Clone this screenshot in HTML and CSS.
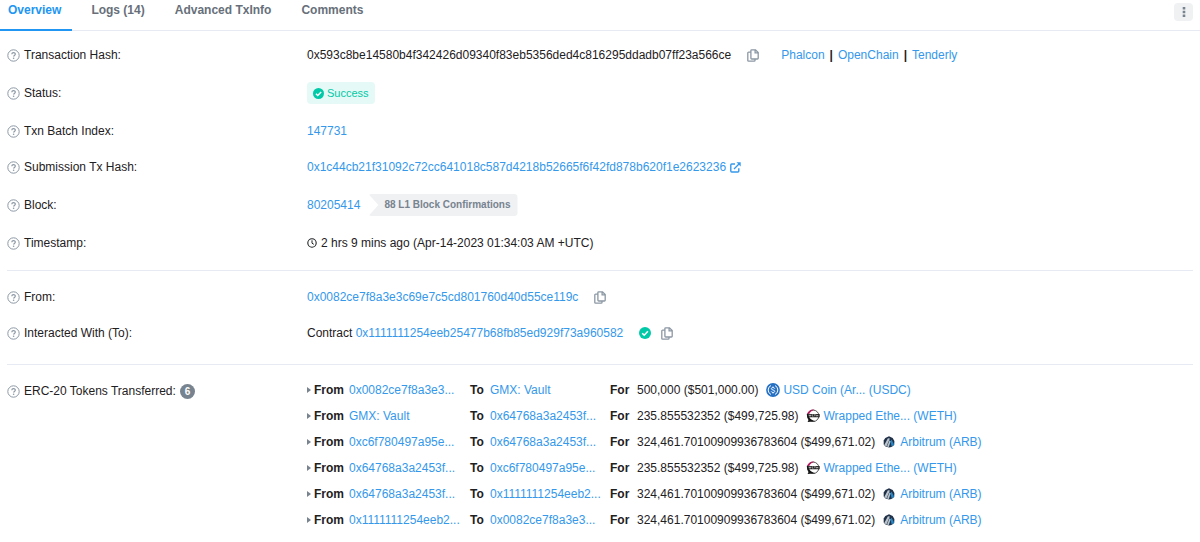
FILE: index.html
```
<!DOCTYPE html>
<html lang="en">
<head>
    <meta charset="UTF-8">
    <meta name="viewport" content="width=device-width, initial-scale=1.0">
    <title>Transaction Details</title>
    <link rel="stylesheet" href="styles.css">
</head>
<body>
    <!-- Shared icons -->
    <svg class="sprite" aria-hidden="true">
        <symbol id="help" viewBox="0 0 13 13">
            <circle cx="6.5" cy="6.5" r="5.7" fill="none" stroke="currentColor"/>
            <path d="M4.8 5.2c0-2.2 3.5-2.2 3.5-.1 0 1.3-1.7 1.3-1.7 2.5" fill="none" stroke="currentColor" stroke-width="1.2"/>
            <circle cx="6.6" cy="9.3" r=".8" fill="currentColor"/>
        </symbol>
        <symbol id="copy" viewBox="0 0 12 13">
            <path d="M4.7.8h3.8l2.7 2.7v5.7q0 .8-.8.8H4.7q-.8 0-.8-.8V1.6q0-.8.8-.8zM8.1.8v3h3M3.700 3.200H1.600q-.8 0-.8.8v7.400q0 .8.8.8h5.600q.8 0 .8-.8v-1.200" fill="none" stroke="currentColor" stroke-width="1.3"/>
        </symbol>
        <symbol id="check" viewBox="0 0 12 12">
            <circle cx="6" cy="6" r="6" fill="currentColor"/>
            <path d="M3.200 6.200l2 2 3.700-3.900" fill="none" stroke="#fff" stroke-width="1.600"/>
        </symbol>
        <symbol id="external" viewBox="0 0 11 11">
            <path d="M5 2H1.700q-.9 0-.9.900v6.200q0 .9.900.9h6.200q.9 0 .9-.9V6.200M4 7l5.500-5.500" fill="none" stroke="currentColor" stroke-width="1.400"/>
            <path d="M6.500.3h4.200v4.200z" fill="currentColor"/>
        </symbol>
        <symbol id="clock" viewBox="0 0 10 10">
            <circle cx="5" cy="5" r="4.200" fill="none" stroke="currentColor" stroke-width="1.100"/>
            <path d="M5 2.300V5.200l1.800 1.100" fill="none" stroke="currentColor"/>
        </symbol>
        <symbol id="usdc" viewBox="0 0 14 14">
            <circle cx="7" cy="7" r="6.900" fill="#2671c4"/>
            <path d="M5 2.500a5 5 0 0 0 0 9M9 2.500a5 5 0 0 1 0 9" fill="none" stroke="#fff"/>
            <path d="M8.800 5.700C8.500 4.100 5.300 4.200 5.300 5.700c0 1.700 3.500.9 3.500 2.600 0 1.600-3.300 1.600-3.700 0M7 3.500v1M7 9.500v1" fill="none" stroke="#fff" stroke-width=".9"/>
        </symbol>
        <symbol id="weth" viewBox="0 0 14 14">
            <circle cx="7.200" cy="6.800" r="5.700" fill="#fff" stroke="#444" stroke-width=".9"/>
            <path d="M.900 5.500A6.200 6.200 0 0 1 8.500.800Q4.500 1.800 3 5.500z" fill="#b0205f"/>
            <path d="M.800 5h12.800v3.200H3.300Q4.500 10.800 9.500 12.300L1.600 13l.9-2Q.800 8.500.800 5z" fill="#161616"/>
            <path d="M2.800 5.700l.6 1.600.6-1.600.6 1.600.6-1.600M7.500 5.700H6.300v1.600h1.200M8 5.800h1.800M8.900 5.700v1.800M10.600 5.700v1.800M12 5.700v1.800M10.600 6.600H12" fill="none" stroke="#fff" stroke-width=".5"/>
        </symbol>
        <symbol id="arb" viewBox="0 0 12 12">
            <path d="M6 .3l3.700 1.600 1.700 3.100-.2 3.900L8.500 11 6 11.500 2.500 10.600.7 8.500V4.500L2.300 2z" fill="#213147"/>
            <path d="M7.500 5.500l1-2 2.500 5-2.300 2.200z" fill="#2188cc"/>
            <path d="M4.900 2.300l2 .2L3.400 10.400 1.300 9zM6.600 4.200l1 1.200L5.800 11.100 4 10.600z" fill="#bcc5cd"/>
        </symbol>
    </svg>

    <header class="tabs-bar">
        <nav class="tabs">
            <a class="tab active" href="#">Overview</a>
            <a class="tab" href="#">Logs (14)</a>
            <a class="tab" href="#">Advanced TxInfo</a>
            <a class="tab" href="#">Comments</a>
        </nav>
        <button class="menu-button" type="button" aria-label="More options">
            <svg width="4" height="10" viewBox="0 0 4 10"><path d="M.7 0h2.600v2.600H.7zM.7 3.700h2.600v2.600H.7zM.7 7.400h2.600V10H.7z" fill="currentColor"/></svg>
        </button>
    </header>

    <main class="details">
        <div class="row">
            <div class="label"><svg class="help"><use href="#help"/></svg>Transaction Hash:</div>
            <div class="value">
                <span>0x593c8be14580b4f342426d09340f83eb5356ded4c816295ddadb07ff23a566ce</span>
                <button class="copy" type="button" aria-label="Copy hash"><svg><use href="#copy"/></svg></button>
                <div class="tools"><a href="#">Phalcon</a><b>|</b><a href="#">OpenChain</a><b>|</b><a href="#">Tenderly</a></div>
            </div>
        </div>
        <div class="row">
            <div class="label"><svg class="help"><use href="#help"/></svg>Status:</div>
            <div class="value"><span class="status"><svg class="status-icon"><use href="#check"/></svg>Success</span></div>
        </div>
        <div class="row">
            <div class="label"><svg class="help"><use href="#help"/></svg>Txn Batch Index:</div>
            <div class="value"><a href="#">147731</a></div>
        </div>
        <div class="row">
            <div class="label"><svg class="help"><use href="#help"/></svg>Submission Tx Hash:</div>
            <div class="value"><a class="external" href="#">0x1c44cb21f31092c72cc641018c587d4218b52665f6f42fd878b620f1e2623236<svg><use href="#external"/></svg></a></div>
        </div>
        <div class="row">
            <div class="label"><svg class="help"><use href="#help"/></svg>Block:</div>
            <div class="value"><a href="#">80205414</a><span class="confirmations">88 L1 Block Confirmations</span></div>
        </div>
        <div class="row">
            <div class="label"><svg class="help"><use href="#help"/></svg>Timestamp:</div>
            <div class="value"><svg class="clock"><use href="#clock"/></svg>2 hrs 9 mins ago (Apr-14-2023 01:34:03 AM +UTC)</div>
        </div>

        <hr>

        <div class="row">
            <div class="label"><svg class="help"><use href="#help"/></svg>From:</div>
            <div class="value">
                <a href="#">0x0082ce7f8a3e3c69e7c5cd801760d40d55ce119c</a>
                <button class="copy" type="button" aria-label="Copy address"><svg><use href="#copy"/></svg></button>
            </div>
        </div>
        <div class="row">
            <div class="label"><svg class="help"><use href="#help"/></svg>Interacted With (To):</div>
            <div class="value">
                <span>Contract <a href="#">0x1111111254eeb25477b68fb85ed929f73a960582</a></span>
                <svg class="verified"><use href="#check"/></svg>
                <button class="copy" type="button" aria-label="Copy address"><svg><use href="#copy"/></svg></button>
            </div>
        </div>

        <hr class="wide">

        <div class="row transfers-row">
            <div class="label"><svg class="help"><use href="#help"/></svg>ERC-20 Tokens Transferred: <span class="count">6</span></div>
            <ul class="transfers">
                <li><i class="caret"></i><b>From</b><a href="#">0x0082ce7f8a3e3...</a><b>To</b><a href="#">GMX: Vault</a><b>For</b><span class="amount">500,000 ($501,000.00)<svg class="token"><use href="#usdc"/></svg><a href="#">USD Coin (Ar... (USDC)</a></span></li>
                <li><i class="caret"></i><b>From</b><a href="#">GMX: Vault</a><b>To</b><a href="#">0x64768a3a2453f...</a><b>For</b><span class="amount">235.855532352 ($499,725.98)<svg class="token"><use href="#weth"/></svg><a href="#">Wrapped Ethe... (WETH)</a></span></li>
                <li><i class="caret"></i><b>From</b><a href="#">0xc6f780497a95e...</a><b>To</b><a href="#">0x64768a3a2453f...</a><b>For</b><span class="amount">324,461.70100909936783604 ($499,671.02)<svg class="token arb"><use href="#arb"/></svg><a href="#">Arbitrum (ARB)</a></span></li>
                <li><i class="caret"></i><b>From</b><a href="#">0x64768a3a2453f...</a><b>To</b><a href="#">0xc6f780497a95e...</a><b>For</b><span class="amount">235.855532352 ($499,725.98)<svg class="token"><use href="#weth"/></svg><a href="#">Wrapped Ethe... (WETH)</a></span></li>
                <li><i class="caret"></i><b>From</b><a href="#">0x64768a3a2453f...</a><b>To</b><a href="#">0x1111111254eeb2...</a><b>For</b><span class="amount">324,461.70100909936783604 ($499,671.02)<svg class="token arb"><use href="#arb"/></svg><a href="#">Arbitrum (ARB)</a></span></li>
                <li><i class="caret"></i><b>From</b><a href="#">0x1111111254eeb2...</a><b>To</b><a href="#">0x0082ce7f8a3e3...</a><b>For</b><span class="amount">324,461.70100909936783604 ($499,671.02)<svg class="token arb"><use href="#arb"/></svg><a href="#">Arbitrum (ARB)</a></span></li>
            </ul>
        </div>
    </main>
</body>
</html>
```
FILE: styles.css
```
* {
    box-sizing: border-box;
}

body {
    margin: 0;
    font-family: "Liberation Sans", Arial, sans-serif;
    font-size: 12px;
    line-height: 18px;
    color: #1e2022;
    background-color: #fff;
}

a {
    color: #3498eb;
    text-decoration: none;
}

.details a:hover {
    text-decoration: underline;
}

svg {
    display: block;
    flex-shrink: 0;
}

.sprite {
    position: absolute;
    width: 0;
    height: 0;
}

/* Tabs */
.tabs-bar {
    display: flex;
    align-items: flex-start;
    justify-content: space-between;
    border-bottom: 1px solid #e7eaf3;
}

.tabs {
    display: flex;
    gap: 11px;
    margin-bottom: -1px;
}

.tab {
    padding: 1px 11px 10px 8px;
    border-bottom: 2px solid transparent;
    font-weight: bold;
    color: #67707a;
}

.tab.active {
    color: #2196f3;
    border-bottom-color: #2196f3;
}

.menu-button {
    display: flex;
    align-items: center;
    justify-content: center;
    width: 19px;
    height: 18px;
    margin: 3px 7px 0 0;
    padding: 0;
    border: none;
    border-radius: 4px;
    background-color: #f0f1f3;
    color: #77838f;
    cursor: pointer;
}

/* Detail rows */
.details {
    padding-top: 6px;
}

.row {
    display: flex;
    align-items: center;
    padding: 9px 0;
}

.label {
    display: flex;
    align-items: center;
    flex: 0 0 25%;
    padding-left: 7px;
}

.help {
    width: 13px;
    height: 13px;
    margin-right: 4px;
    color: #8c98a4;
}

.value {
    display: flex;
    align-items: center;
    flex: 1;
    padding-left: 7px;
}

.copy {
    margin-left: 16px;
    padding: 0;
    border: none;
    background: none;
    color: #8c98a4;
    cursor: pointer;
}

.copy svg {
    width: 12px;
    height: 13px;
}

.tools {
    display: flex;
    gap: 5px;
    margin-left: 22px;
}

.status {
    display: flex;
    align-items: center;
    gap: 3px;
    padding: 2px 6px;
    border-radius: 4px;
    background-color: #e5f9f6;
    color: #00c9a7;
    font-size: 11px;
}

.status-icon {
    width: 11px;
    height: 11px;
}

.external {
    display: flex;
    align-items: center;
    gap: 4px;
}

.external svg {
    width: 11px;
    height: 11px;
}

.confirmations {
    margin-left: 8px;
    padding: 2px 7px 2px 16px;
    border-radius: 4px;
    background-color: #f0f1f3;
    color: #77838f;
    font-size: 10px;
    font-weight: bold;
    clip-path: polygon(0 0, 100% 0, 100% 100%, 0 100%, 10px 50%);
}

.clock {
    width: 10px;
    height: 10px;
    margin-right: 4px;
}

.verified {
    width: 12px;
    height: 12px;
    margin-left: 16px;
    color: #00c9a7;
}

.verified + .copy {
    margin-left: 10px;
}

hr {
    height: 1px;
    margin: 9px 7px 8px;
    border: none;
    background-color: #e7eaf3;
}

hr.wide {
    margin: 13px 7px 8px;
}

/* Token transfers */
.transfers-row {
    align-items: flex-start;
    padding: 4px 0;
}

.transfers-row .label {
    min-height: 28px;
}

.count {
    margin-left: 4px;
    padding: 0 5px;
    border-radius: 8px;
    background-color: #77838f;
    color: #fff;
    font-size: 10px;
    font-weight: bold;
    line-height: 15px;
}

.transfers {
    flex: 1;
    margin: 0;
    padding: 0 0 0 7px;
    list-style: none;
}

.transfers li {
    display: grid;
    grid-template-columns: 7px 35px 121px 20px 120px 27px auto;
    align-items: center;
    height: 26px;
    white-space: nowrap;
}

.caret {
    width: 0;
    height: 0;
    border: 3px solid transparent;
    border-left: 4px solid #77838f;
    border-right: none;
}

.amount {
    display: flex;
    align-items: center;
}

.token {
    width: 14px;
    height: 14px;
    margin: 0 3px 0 8px;
}

.token.arb {
    width: 12px;
    height: 12px;
    margin-right: 5px;
}
```
